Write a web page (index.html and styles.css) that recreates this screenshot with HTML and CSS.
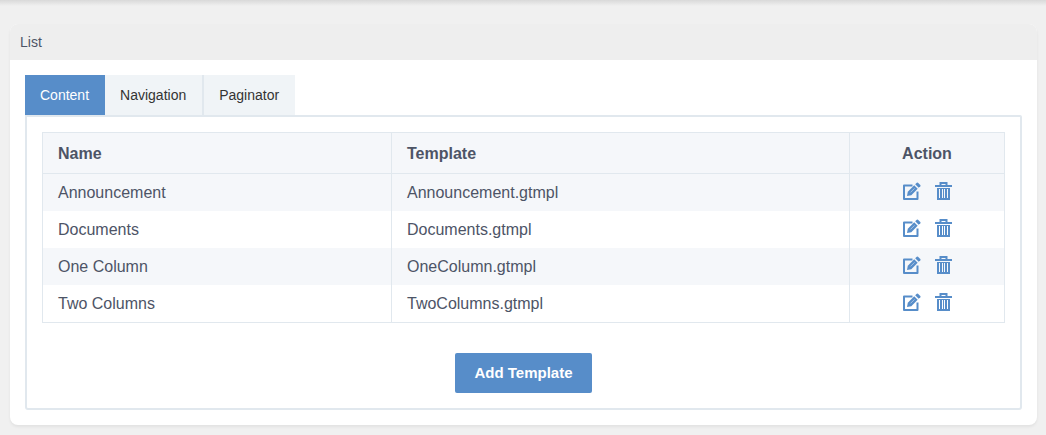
FILE: index.html
```
<!DOCTYPE html>
<html lang="en">
<head>
<meta charset="utf-8">
<meta name="viewport" content="width=device-width, initial-scale=1">
<title>List</title>
<link rel="stylesheet" href="styles.css">
</head>
<body>
<svg class="sprite" aria-hidden="true">
  <symbol id="edit" viewBox="0 0 18 18">
    <path d="M9.500 3.500H1V17H14.500V9.500" fill="none" stroke="currentColor" stroke-width="2" stroke-linejoin="round"/>
    <path d="M4 14L4.800 9.700L11.200 3.300L14.700 6.800L8.300 13.200Z" fill="currentColor"/>
    <path d="M12.200 2.300L13.800 .7Q14.400 .2 15 .7L17.300 3Q17.800 3.600 17.300 4.200L15.700 5.800Z" fill="currentColor"/>
    <path d="M7.500 10.400L11.500 6.400" fill="none" stroke="#fff" stroke-width=".8" opacity=".6"/>
  </symbol>
  <symbol id="trash" viewBox="0 0 18 18">
    <path d="M5.500 3V1H11.500V3" fill="none" stroke="currentColor" stroke-width="2"/>
    <path d="M0 3H17V5H0Z" fill="currentColor"/>
    <path d="M2 6H15V18H2ZM4 7V16H5V7ZM7 7V16H8V7ZM9 7V16H10V7ZM12 7V16H13V7Z" fill="currentColor" fill-rule="evenodd"/>
  </symbol>
</svg>
<main class="page">
  <section class="card">
    <h1 class="card-title">List</h1>
    <div class="card-body">
      <div class="tabs" role="tablist">
        <button class="tab active" type="button" role="tab" aria-selected="true">Content</button>
        <button class="tab" type="button" role="tab" aria-selected="false">Navigation</button>
        <button class="tab" type="button" role="tab" aria-selected="false">Paginator</button>
      </div>
      <div class="pane" role="tabpanel">
        <table class="grid">
          <colgroup><col class="col-name"><col><col class="col-action"></colgroup>
          <thead><tr><th>Name</th><th>Template</th><th class="center">Action</th></tr></thead>
          <tbody>
            <tr><td>Announcement</td><td>Announcement.gtmpl</td><td class="tools"><div class="actions"><button class="icon" type="button" aria-label="Edit Announcement"><svg><use href="#edit"/></svg></button><button class="icon" type="button" aria-label="Delete Announcement"><svg><use href="#trash"/></svg></button></div></td></tr>
            <tr><td>Documents</td><td>Documents.gtmpl</td><td class="tools"><div class="actions"><button class="icon" type="button" aria-label="Edit Documents"><svg><use href="#edit"/></svg></button><button class="icon" type="button" aria-label="Delete Documents"><svg><use href="#trash"/></svg></button></div></td></tr>
            <tr><td>One Column</td><td>OneColumn.gtmpl</td><td class="tools"><div class="actions"><button class="icon" type="button" aria-label="Edit One Column"><svg><use href="#edit"/></svg></button><button class="icon" type="button" aria-label="Delete One Column"><svg><use href="#trash"/></svg></button></div></td></tr>
            <tr><td>Two Columns</td><td>TwoColumns.gtmpl</td><td class="tools"><div class="actions"><button class="icon" type="button" aria-label="Edit Two Columns"><svg><use href="#edit"/></svg></button><button class="icon" type="button" aria-label="Delete Two Columns"><svg><use href="#trash"/></svg></button></div></td></tr>
          </tbody>
        </table>
        <div class="footer"><button class="primary" type="button">Add Template</button></div>
      </div>
    </div>
  </section>
</main>
</body>
</html>
```
FILE: styles.css
```
* { box-sizing: border-box; }
body {
  margin: 0;
  background: #f0f0f0;
  color: #4d5466;
  font-family: "Liberation Sans", Arial, sans-serif;
  font-size: 16px;
  line-height: 20px;
}
button { font: inherit; border: 0; margin: 0; cursor: pointer; }
.sprite { display: none; }
.page {
  padding: 24px 9px 10px 10px;
  background: linear-gradient(#d9d9d9, #f0f0f0 6px);
}
.card {
  background: #fff;
  border-radius: 8px;
  box-shadow: 0 2px 3px rgba(0, 0, 0, 0.06);
}
.card-title {
  margin: 0;
  padding: 8px 10px;
  background: #eee;
  border-radius: 8px 8px 0 0;
  font-size: 14px;
  font-weight: 400;
}
.card-body { padding: 15px; }
.tabs { display: flex; }
.tab {
  padding: 10px 16px 10px 15px;
  background: #f0f4f7;
  color: #333;
  font-size: 14px;
}
.tab + .tab + .tab { border-left: 2px solid #e1e8ee; }
.tab.active { background: #578dc9; color: #fff; }
.pane {
  padding: 15px;
  border: 2px solid #e1e8ee;
  border-radius: 0 2px 3px 3px;
}
.grid {
  width: 100%;
  table-layout: fixed;
  border-collapse: separate;
  border-spacing: 0;
  border: 1px solid #e1e8ee;
}
.col-name { width: 348px; }
.col-action { width: 155px; }
th, td {
  padding: 9px 15px 8px;
  text-align: left;
}
th { padding: 11px 15px 9px; background: #f5f7fa; border-bottom: 1px solid #e1e8ee; }
th + th, td + td { border-left: 1px solid #e1e8ee; }
th.center { text-align: center; }
tbody tr:nth-child(odd) { background: #f5f7fa; }
.tools { padding: 8px 14px 11px 15px; vertical-align: top; }
.actions { display: flex; justify-content: center; gap: 14px; }
.icon { display: flex; padding: 0; background: none; color: #578dc9; }
.icon svg { width: 18px; height: 18px; }
.footer { padding-top: 30px; text-align: center; }
.primary {
  display: inline-block;
  vertical-align: top;
  padding: 10px 19px;
  background: #578dc9;
  border-radius: 2px;
  color: #fff;
  font-size: 15px;
  font-weight: 700;
}
```
